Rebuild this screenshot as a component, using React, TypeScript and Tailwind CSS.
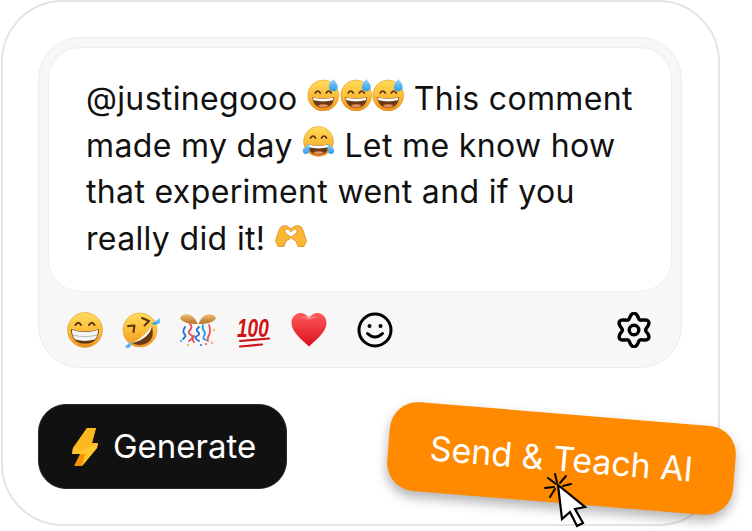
const gearPath = (() => {
  const pts: string[] = []
  for (let i = 0; i < 120; i++) {
    const t = (i / 120) * Math.PI * 2
    const r = 14.2 + 2.6 * Math.cos(6 * t)
    pts.push(`${(18 + r * Math.sin(t)).toFixed(2)} ${(18 - r * Math.cos(t)).toFixed(2)}`)
  }
  return 'M' + pts.join('L') + 'Z'
})()

const Defs = () => (
  <svg className="absolute h-0 w-0">
    <defs>
      <linearGradient id="face" x1="0" y1="0" x2="0" y2="1">
        <stop offset="0" stopColor="#ffdc5c" />
        <stop offset="0.55" stopColor="#fbbb36" />
        <stop offset="1" stopColor="#ee8f1c" />
      </linearGradient>
      <linearGradient id="heart" x1="0" y1="0" x2="0" y2="1">
        <stop offset="0" stopColor="#ff5a5a" />
        <stop offset="1" stopColor="#d9101a" />
      </linearGradient>
      <linearGradient id="drop" x1="0" y1="0" x2="0" y2="1">
        <stop offset="0" stopColor="#8fd6ff" />
        <stop offset="1" stopColor="#2e9be8" />
      </linearGradient>
      <linearGradient id="gold" x1="0" y1="0" x2="0" y2="1">
        <stop offset="0" stopColor="#f0c070" />
        <stop offset="1" stopColor="#b5722a" />
      </linearGradient>
    </defs>
  </svg>
)

const Eyes = () => (
  <path
    d="M8 14q2.500-4 5 0M19 14q2.500-4 5 0"
    fill="none"
    stroke="#5b3412"
    strokeWidth="1.700"
    strokeLinecap="round"
  />
)

const Mouth = () => (
  <>
    <path d="M5 18q11 3 22 0q-1 11-11 11t-11-11z" fill="#6b3a14" />
    <path d="M5.800 18.500q10.200 2.700 20.400 0l-.5 2.800q-9.700 2.300-19.400 0z" fill="#fff" />
    <path d="M10.500 26.500q5.500-2.600 11 0q-2.500 2-5.500 2t-5.500-2z" fill="#e9905a" />
  </>
)

const SweatEmoji = () => (
  <svg viewBox="0 0 32 32" className="inline-block h-[32px] w-[32.500px] align-[-1px]">
    <circle cx="16" cy="16.500" r="15.500" fill="url(#face)" stroke="#e08a1e" strokeWidth="0.5" />
    <Eyes />
    <Mouth />
    <path d="M26 0q4.500 5.200 4.500 7.800a4.500 4.500 0 0 1-9 0q0-2.600 4.500-7.800z" fill="url(#drop)" />
  </svg>
)

const JoyEmoji = () => (
  <svg viewBox="0 0 32 32" className="inline-block h-[32px] w-[33px] align-[-1px]">
    <circle cx="16" cy="15.500" r="15" fill="url(#face)" stroke="#e08a1e" strokeWidth="0.5" />
    <path d="M8 12q2.500-4 5 0M19 12q2.500-4 5 0" fill="none" stroke="#5b3412" strokeWidth="1.700" strokeLinecap="round" />
    <Mouth />
    <path d="M6 17q-2 4-5.500 6q-1 4 2 5q3.500 .5 4.500-3q.8-4-1-8z" fill="url(#drop)" />
    <path d="M26 17q2 4 5.500 6q1 4-2 5q-3.500 .5-4.500-3q-.8-4 1-8z" fill="url(#drop)" />
  </svg>
)

const HeartHands = () => (
  <svg viewBox="0 0 32 22" className="inline-block h-[22px] w-[32px] align-[3px]">
    <path
      d="M16 4C13 0 7-.5 5 3C3 7 2 12 .5 16L3 21.500L9 21.500L11 16C13 15 15 14 16 12.500C17 14 19 15 21 16L23 21.500L29 21.500L31.500 16C30 12 29 7 27 3C25-.5 19 0 16 4Z"
      fill="#fbb733"
      stroke="#d98a1a"
      strokeWidth="0.800"
      strokeLinejoin="round"
    />
    <path
      d="M16 12C13 10 10 8 10 6C10 3.500 14 3.500 16 7C18 3.500 22 3.500 22 6C22 8 19 10 16 12Z"
      fill="#fff"
      stroke="#d98a1a"
      strokeWidth="0.800"
    />
  </svg>
)

const Grin = () => (
  <svg viewBox="0 0 32 32" className="h-[36px] w-[36px]">
    <circle cx="16" cy="16" r="15.500" fill="url(#face)" stroke="#e08a1e" strokeWidth="0.5" />
    <path d="M7.500 11.500q2.500-4 5 0M19.500 11.500q2.500-4 5 0" fill="none" stroke="#5b3412" strokeWidth="1.700" strokeLinecap="round" />
    <path d="M3.500 15q12.500 4.500 25 0q-.5 13-12.500 13t-12.500-13z" fill="#5b3412" />
    <path d="M4.300 15.800q11.700 4 23.400 0q-.3 6-3 8.700q-8.700 2.500-17.400 0q-2.700-2.700-3-8.700z" fill="#f4f4f4" />
    <path d="M5 20.500q11 2.700 22 0" fill="none" stroke="#a8a8a8" strokeWidth="0.700" />
  </svg>
)

const Rofl = () => (
  <svg viewBox="0 0 38 36" className="h-[36px] w-[38px]">
    <circle cx="18" cy="18" r="17" fill="url(#face)" stroke="#e08a1e" strokeWidth="0.5" />
    <path d="M20 6l7 3l-4.500 4.500M6 14l6.500-.5l-1 6.500" fill="none" stroke="#5b3412" strokeWidth="2" strokeLinecap="round" strokeLinejoin="round" />
    <path d="M30 14q-3 12-20 17q9 4 16-.5q7-5 4-16.500z" fill="#6b3a14" />
    <path d="M30 14q-6 9-16 15l-4 2q17-4 20-17z" fill="#fff" />
    <path d="M29 12l9-6q1 3.500-1 5.500q-3 2-8 .5z" fill="url(#drop)" />
    <path d="M9 29l-6 6q3 1.500 5 0q1.500-2 1-6z" fill="url(#drop)" />
  </svg>
)

const Confetti = () => (
  <svg viewBox="0 0 38 36" className="h-[36px] w-[38px]">
    <path d="M18.500 12C12 12 3 11 1 6C3 1 14-1 18.500 12Z" fill="url(#gold)" />
    <path d="M19.500 12C26 12 35 11 37 6C35 1 24-1 19.500 12Z" fill="url(#gold)" />
    <g fill="none" strokeWidth="1.800" strokeLinecap="round">
      <path d="M6 15q-3 5-.5 7t-1.500 5" stroke="#1d6fe0" />
      <path d="M11 12q3 3 0 6t1 5t-2 6" stroke="#e8505b" />
      <path d="M20 15q-4 3-1 5t-1 4t2 5" stroke="#1d6fe0" />
      <path d="M15 24q-3 3 0 6" stroke="#e8505b" />
      <path d="M24 13q-1 4 1 6t0 5t2 4" stroke="#2a9fd8" />
      <path d="M30 13q2 6 0 10t-1 6" stroke="#e8505b" />
    </g>
    <circle cx="9" cy="33" r="1.200" fill="#f4c430" />
    <circle cx="22" cy="33" r="1" fill="#1d6fe0" />
    <circle cx="35" cy="18" r="1.200" fill="#f4c430" />
    <circle cx="33" cy="31" r="1.400" fill="#f0b8a0" />
    <circle cx="2" cy="29" r="1" fill="#2a9fd8" />
    <circle cx="27" cy="32" r="1" fill="#e8505b" />
  </svg>
)

const Hundred = () => (
  <svg viewBox="0 0 36 36" className="h-[36px] w-[36px]">
    <text
      transform="translate(1 25) scale(1 1.350)"
      fontFamily="Liberation Sans, sans-serif"
      fontStyle="italic"
      fontWeight="700"
      fontSize="19"
      fill="#cf1212"
    >
      100
    </text>
    <path d="M4 29L33 26.500M4 34.500L26 32.500" stroke="#cf1212" strokeWidth="2.200" strokeLinecap="round" fill="none" />
  </svg>
)

const Heart = () => (
  <svg viewBox="0 0 36 36" className="h-[36px] w-[36px]">
    <path
      d="M18 34.500C12 28.500 1 21 .500 11.500C.300 5.500 4.500 1 9.500 1C13 1 16.200 3 18 6.500C19.800 3 23 1 26.500 1C31.500 1 35.700 5.500 35.500 11.500C35 21 24 28.500 18 34.500Z"
      fill="url(#heart)"
    />
    <path d="M5 7q13-6 26 0q-6-3-13 1q-7-4-13-1z" fill="#ff8f8f" opacity="0.600" />
  </svg>
)

const Smiley = () => (
  <svg viewBox="0 0 36 36" className="h-[36px] w-[36px]" fill="none" stroke="#000" strokeWidth="3" strokeLinecap="round">
    <circle cx="18" cy="18" r="16" />
    <circle cx="12.500" cy="14" r="2" fill="#000" stroke="none" />
    <circle cx="23.500" cy="14" r="2" fill="#000" stroke="none" />
    <path d="M10.500 21.500q7.500 7 15 0" />
  </svg>
)

const Gear = () => (
  <svg viewBox="0 0 36 36" className="h-[36px] w-[36px]" fill="none" stroke="#000" strokeWidth="3.400">
    <path d={gearPath} strokeLinejoin="round" />
    <circle cx="18" cy="18" r="4.800" />
  </svg>
)

const Bolt = () => (
  <svg viewBox="0 0 26 38" className="h-[38px] w-[26px]">
    <path d="M15 0L24 0L20 15L26 15L25 20L10 38L2 38L8 26L0 26L1 20Z" fill="#f59300" />
    <path d="M15 0L24 0L20 15L26 15L9 22L1 20Z" fill="#ffb81f" />
    <path d="M1 20L9 22L26 15L25 20L10 38L13 26L0 26Z" fill="#ffc42e" />
  </svg>
)

const ClickCursor = () => (
  <svg viewBox="0 0 48 60" className="h-[60px] w-[48px]">
    <g transform="translate(16 14)">
      <g stroke="#000" strokeWidth="2" strokeLinecap="round">
        <path d="M-3-11L-1-3M8-9L2-2M13-1L5 1M-10-7L-2-1M-13 3L-4 2M-8 12L-3 4" />
      </g>
      <path d="M0 0L27 22L17 24L25 38L19 41L12 27L4 34Z" fill="#fff" stroke="#000" strokeWidth="2.200" />
    </g>
  </svg>
)

export default function App() {
  return (
    <div className="h-[531px] w-[752px] overflow-hidden bg-white pl-px font-['Inter',sans-serif] text-[#111]">
      <Defs />
      <div className="h-[526px] w-[719px] rounded-[62px] border-2 border-[#e4e4e4] px-[35px] pt-[35px]">
        <div className="h-[331px] w-[644px] rounded-[42px] border border-[#ececec] bg-[#f7f7f7]">
          <div className="mx-[9px] mt-[9px] h-[245px] w-[624px] rounded-[32px] border border-[#eeeeee] bg-white pl-[37px] pt-[28px] text-[32px] leading-[46.700px] tracking-[0.350px]">
            <div className="whitespace-nowrap">
              @justinegooo <SweatEmoji />
              <SweatEmoji />
              <SweatEmoji /> This comment
            </div>
            <div className="whitespace-nowrap">
              made my day <JoyEmoji /> Let me know how
            </div>
            <div className="whitespace-nowrap">that experiment went and if you</div>
            <div className="whitespace-nowrap">
              really did it! <HeartHands />
            </div>
          </div>
          <div className="flex h-[75px] items-center justify-between pl-[28px] pr-[29px]">
            <div className="flex items-center">
              <div className="flex items-center gap-[19px]">
                <Grin />
                <Rofl />
                <Confetti />
                <Hundred />
                <Heart />
              </div>
              <div className="ml-[30px]">
                <Smiley />
              </div>
            </div>
            <Gear />
          </div>
        </div>
        <div className="relative mt-[36px] flex items-start">
          <div className="flex h-[85px] w-[249px] items-center gap-[15px] rounded-[28px] border border-[#2a2a2a] bg-[#111] pl-[33px] text-[33px] text-white">
            <Bolt />
            Generate
          </div>
          <div className="absolute left-[350px] top-[10px] flex h-[89px] w-[347px] rotate-[4.700deg] items-center justify-center rounded-[28px] bg-[#ff8a00] text-[34px] text-white shadow-[0_6px_12px_rgba(0,0,0,0.3)]">
            Send &amp; Teach AI
          </div>
          <div className="absolute left-[504px] top-[67px]">
            <ClickCursor />
          </div>
        </div>
      </div>
    </div>
  )
}
